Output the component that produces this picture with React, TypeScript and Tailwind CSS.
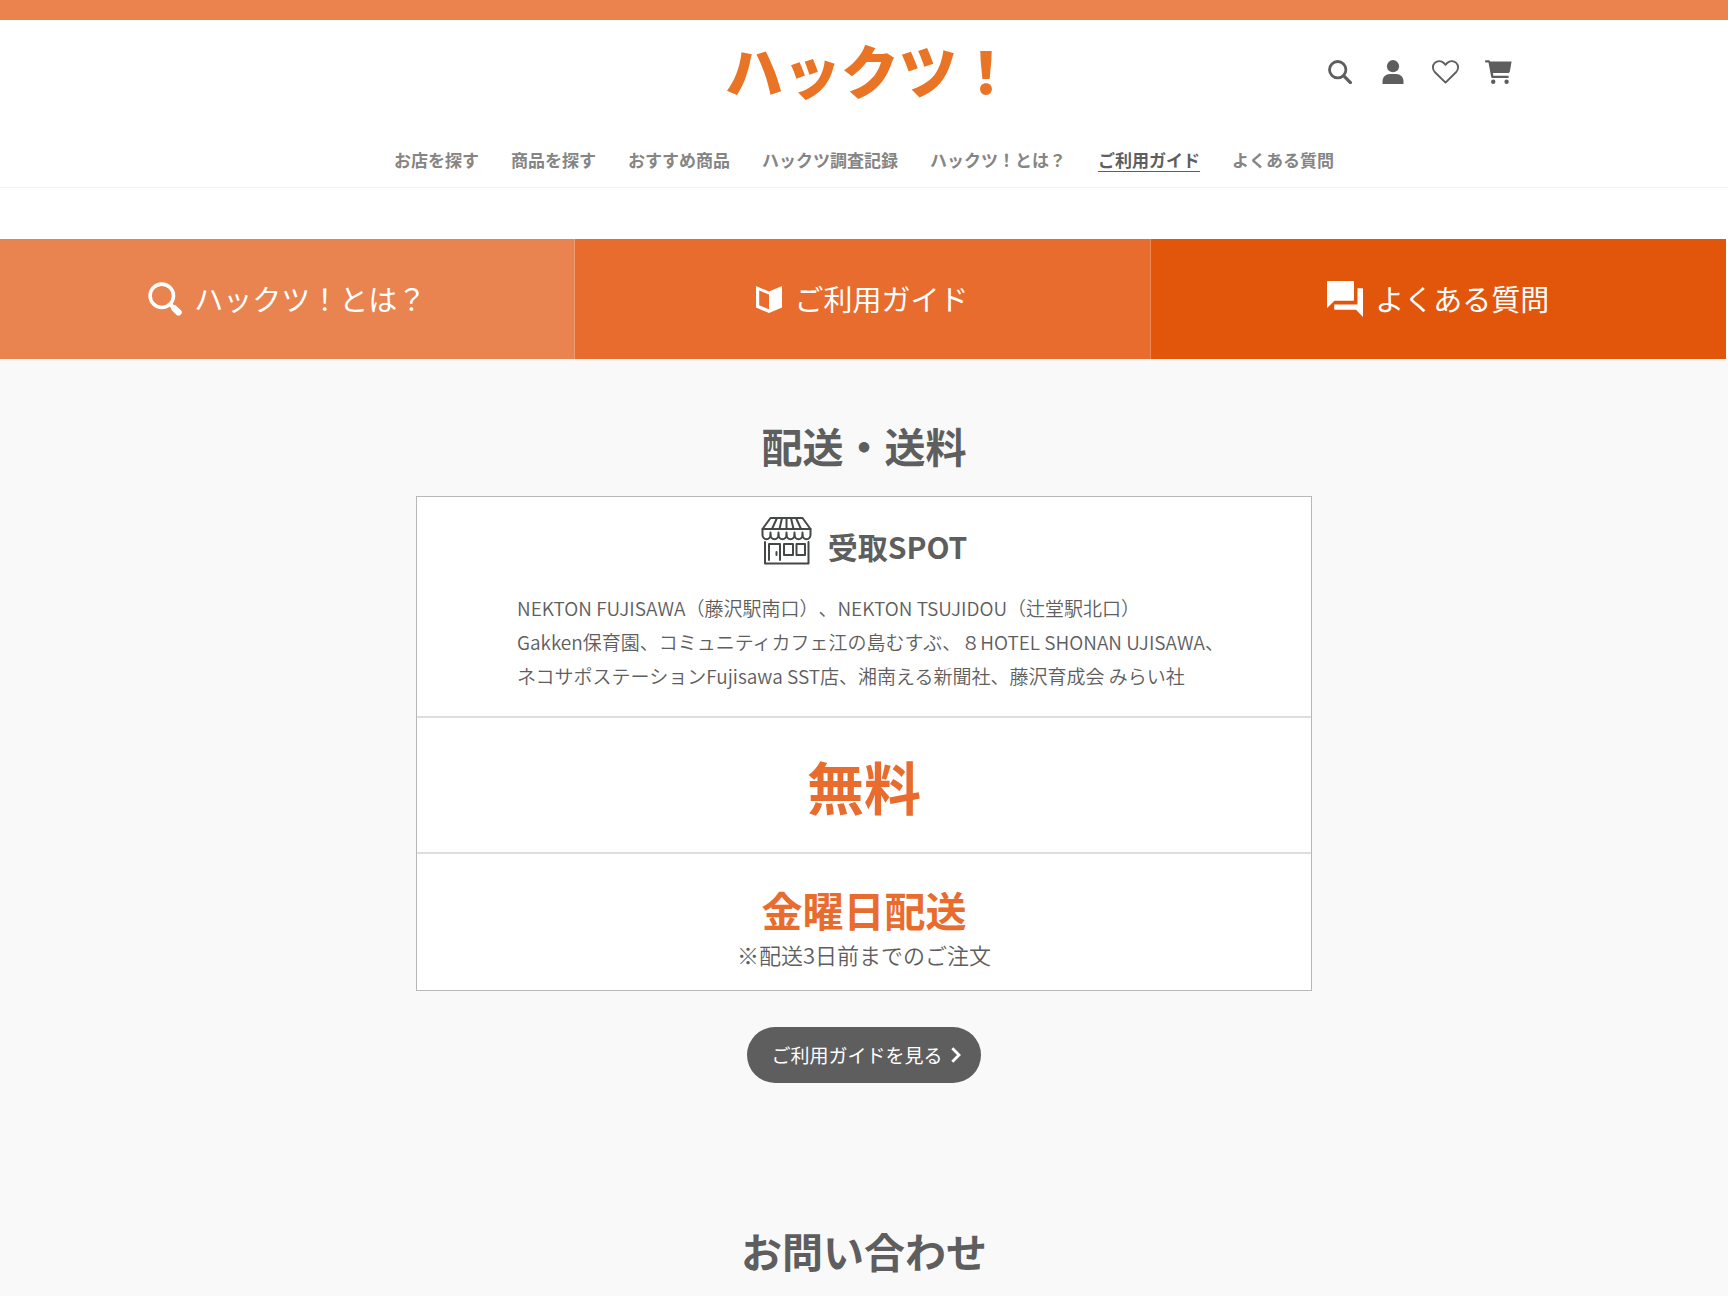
import type { ReactNode } from 'react';

interface NavItem {
  label: string;
  href: string;
  active?: boolean;
}

const navItems: NavItem[] = [
  { label: 'お店を探す', href: '#shops' },
  { label: '商品を探す', href: '#products' },
  { label: 'おすすめ商品', href: '#recommend' },
  { label: 'ハックツ調査記録', href: '#reports' },
  { label: 'ハックツ！とは？', href: '#about' },
  { label: 'ご利用ガイド', href: '#guide', active: true },
  { label: 'よくある質問', href: '#faq' },
];

const spotLines = [
  'NEKTON FUJISAWA（藤沢駅南口）、NEKTON TSUJIDOU（辻堂駅北口）',
  'Gakken保育園、コミュニティカフェ江の島むすぶ、８HOTEL SHONAN UJISAWA、',
  'ネコサポステーションFujisawa SST店、湘南える新聞社、藤沢育成会 みらい社',
];

const SearchIcon = () => (
  <svg viewBox="0 0 24 24" className="w-6 h-6" fill="none" stroke="currentColor">
    <circle cx="9.7" cy="9.7" r="8.2" strokeWidth="2.8" />
    <path d="M15.8 15.8L22.4 22.6" strokeWidth="3.2" strokeLinecap="round" />
  </svg>
);

const UserIcon = () => (
  <svg viewBox="0 0 24 24" className="w-6 h-6" fill="currentColor">
    <circle cx="12" cy="6.2" r="6.1" />
    <path d="M1.5 24v-2.4C1.5 17 4.8 14.1 9 14.1h6c4.2 0 7.5 2.9 7.5 7.5V24z" />
  </svg>
);

const HeartIcon = () => (
  <svg viewBox="0 0 27 24" className="w-[27px] h-6" fill="none" stroke="currentColor">
    <path
      d="M13.5 22.6L3 12.3C0.3 9.5 0.3 5.3 2.8 2.9C5.4 0.4 9.4 0.6 11.8 3L13.5 4.8L15.2 3C17.6 0.6 21.6 0.4 24.2 2.9C26.7 5.3 26.7 9.5 24 12.3Z"
      strokeWidth="1.9"
      strokeLinejoin="round"
    />
  </svg>
);

const CartIcon = () => (
  <svg viewBox="0 0 27 24" className="w-[27px] h-6" fill="currentColor">
    <path d="M0.9 0.2H4.3L5.2 1.5H26.6L24.9 11.3C24.7 12.4 24 13.1 22.9 13.1H8L8.3 15.8H23.6V18H7.4C6.7 18 6.3 17.6 6.2 17L3.5 2.4H0.9C-0.3 2.4-0.3 0.2 0.9 0.2Z" />
    <circle cx="8.2" cy="21.8" r="2.2" />
    <circle cx="21.6" cy="21.8" r="2.2" />
  </svg>
);

const MagnifierIcon = () => (
  <svg viewBox="0 0 34 34" className="w-[34px] h-[34px]" fill="none" stroke="currentColor">
    <circle cx="13.8" cy="13.8" r="11.7" strokeWidth="3.6" />
    <path d="M22.5 22.5L26 26" strokeWidth="4" />
    <path d="M26.5 26.5L30.5 30.3" strokeWidth="6.5" strokeLinecap="round" />
  </svg>
);

const BookIcon = () => (
  <svg viewBox="0 0 26 27" className="w-[26px] h-[27px]" fill="currentColor">
    <path
      fillRule="evenodd"
      d="M0 0L13 5.5L26 0V21.5L13 27L0 21.5ZM3.2 4.5V19.3L13 23.3V8.6Z"
    />
  </svg>
);

const ForumIcon = () => (
  <svg viewBox="0 0 36 36" className="w-9 h-9" fill="currentColor">
    <path d="M1 0H26C26.6 0 27 0.4 27 1V18.8C27 19.4 26.6 19.8 26 19.8H7.5L0 27V1C0 0.4 0.4 0 1 0Z" />
    <path d="M30.5 7.2H35C35.6 7.2 36 7.6 36 8.2V36L29 28.8H8.2C7.6 28.8 7.2 28.4 7.2 27.8V23.6H30.5Z" />
  </svg>
);

const ShopIcon = () => (
  <svg
    viewBox="0 0 51 48"
    className="w-[51px] h-12"
    fill="none"
    stroke="currentColor"
    strokeWidth="2"
    strokeLinejoin="round"
    strokeLinecap="round"
  >
    <path d="M9.5 1H41.5L49.5 12H1.5Z" />
    <path d="M16 1L11 12M21 1L18.5 12M25.5 1V12M30 1L32.5 12M35 1L40 12" />
    <path d="M1.5 12V18C1.5 23.5 9.5 23.5 9.5 18C9.5 23.5 17.5 23.5 17.5 18C17.5 23.5 25.5 23.5 25.5 18C25.5 23.5 33.5 23.5 33.5 18C33.5 23.5 41.5 23.5 41.5 18C41.5 23.5 49.5 23.5 49.5 18V12" />
    <path d="M9.5 18V15.5M17.5 18V15.5M25.5 18V15.5M33.5 18V15.5M41.5 18V15.5" />
    <path d="M4 25V46.5H47.5V25" />
    <path d="M8 43V27H19V43M15.5 35V38" />
    <path d="M23 27H32V38H23ZM35.5 27H44V38H35.5Z" />
  </svg>
);

const ChevronIcon = () => (
  <svg viewBox="0 0 10 16" className="w-[10px] h-4" fill="none" stroke="currentColor" strokeWidth="2.8">
    <path d="M1.3 1.3L8 8L1.3 14.7" />
  </svg>
);

const GuideTab = ({ icon, label, href, color }: { icon: ReactNode; label: string; href: string; color: string }) => (
  <a
    href={href}
    className={`flex items-center justify-center gap-3 h-[120px] text-[29px] text-white border-r border-white/20 last:border-r-0 ${color}`}
  >
    {icon}
    <span>{label}</span>
  </a>
);

const App = () => {
  return (
    <div
      lang="ja"
      className="min-h-screen overflow-hidden bg-[#f9f9f9] text-[#5e5e5e] font-['Noto_Sans_CJK_JP',sans-serif]"
    >
      <div className="h-5 bg-[#eb834f]" />

      {/* ヘッダー */}
      <header className="bg-white border-b border-[#f3f3f3]">
        <div className="max-w-[1296px] mx-auto grid grid-cols-[1fr_auto_1fr] items-center h-[104px]">
          <div />
          <a href="#top" className="self-start pl-3 text-[58px] leading-[98px] font-black text-[#ea7425]">
            ハックツ！
          </a>
          <div className="flex justify-end gap-[26px]">
            <button type="button" aria-label="検索" className="flex justify-center w-[27px]"><SearchIcon /></button>
            <button type="button" aria-label="ログイン" className="flex justify-center w-[27px]"><UserIcon /></button>
            <button type="button" aria-label="お気に入り" className="flex justify-center w-[27px]"><HeartIcon /></button>
            <button type="button" aria-label="カート" className="flex justify-center w-[27px]"><CartIcon /></button>
          </div>
        </div>
        <nav className="flex justify-center gap-8 h-[63px] pt-6 text-[17px] leading-6 font-bold text-[#858585]">
          {navItems.map((item) => (
            <a
              key={item.label}
              href={item.href}
              className={item.active ? 'h-6 border-b border-[#5e5e5e] text-[#5e5e5e]' : 'h-6'}
            >
              {item.label}
            </a>
          ))}
        </nav>
      </header>

      {/* ガイドのタブ */}
      <div className="bg-white pt-[51px] pr-[2px]">
        <div className="grid grid-cols-3">
          <GuideTab icon={<MagnifierIcon />} label="ハックツ！とは？" href="#about" color="bg-[#e9834f]" />
          <GuideTab icon={<BookIcon />} label="ご利用ガイド" href="#guide" color="bg-[#e86c2d]" />
          <GuideTab icon={<ForumIcon />} label="よくある質問" href="#faq" color="bg-[#e2560c]" />
        </div>
      </div>

      <main>
        {/* 配送・送料 */}
        <section className="flex flex-col items-center pt-[54px]">
          <h2 className="text-[41px] leading-[64px] font-bold">配送・送料</h2>
          <div className="w-full max-w-[896px] mt-[19px] bg-white border border-[#b8b8b8]">
            <div className="h-[221px] pt-5 border-b-2 border-[#dedede]">
              <div className="flex justify-center gap-4">
                <span className="text-[#444846]"><ShopIcon /></span>
                <h3 className="pt-2 text-[30px] leading-[42px] font-bold">受取SPOT</h3>
              </div>
              <p className="mt-6 pl-[100px] text-[19px] leading-[34px] font-[350] whitespace-nowrap [text-spacing-trim:space-all]">
                {spotLines.map((line) => (
                  <span key={line} className="block">{line}</span>
                ))}
              </p>
            </div>
            <div className="flex items-center justify-center h-[136px] border-b-2 border-[#dedede] text-[57px] leading-[80px] font-bold text-[#e86c2d]">
              無料
            </div>
            <div className="h-[136px] pt-[25px] text-center">
              <p className="text-[41px] leading-[60px] font-bold text-[#e86c2d]">金曜日配送</p>
              <p className="text-[22px] leading-[30px] font-[350]">※配送3日前までのご注文</p>
            </div>
          </div>
          <a
            href="#guide"
            className="flex items-center gap-2 h-14 mt-9 pl-6 pr-5 rounded-full bg-[#5e5e5e] text-[19px] text-white"
          >
            ご利用ガイドを見る
            <ChevronIcon />
          </a>
        </section>

        {/* お問い合わせ */}
        <section className="flex flex-col items-center pt-[135px]">
          <h2 className="text-[41px] leading-[64px] font-bold">お問い合わせ</h2>
        </section>
      </main>
    </div>
  );
};

export default App;
